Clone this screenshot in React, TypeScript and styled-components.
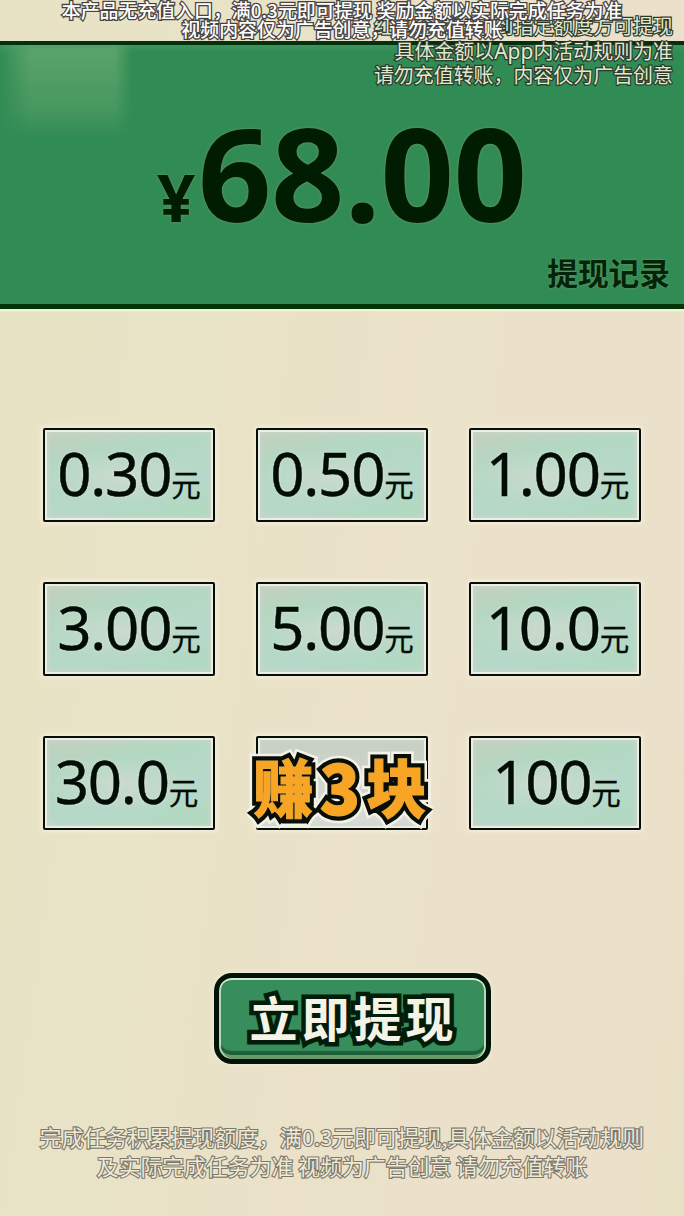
import React from "react";
import styled, { createGlobalStyle } from "styled-components";

const cjk = `"Noto Sans CJK SC", sans-serif`;

const GlobalStyle = createGlobalStyle`
  body { margin: 0; background: #e9e2c5; }
  * { box-sizing: border-box; }
`;

const Screen = styled.main`
  position: relative;
  width: 684px;
  height: 1216px;
  overflow: hidden;
  padding-top: 41px;
  display: flex;
  flex-direction: column;
  align-items: center;
  font-family: ${cjk};
  background: linear-gradient(98deg, #e8e3c5 0%, #e9e2c7 40%, #ebe1ca 65%, #ebe0ca 90%, #e8e1c4 100%);
`;

const Balance = styled.header`
  width: 100%;
  height: 268px;
  flex: none;
  display: flex;
  flex-direction: column;
  border-top: 4px solid #03300f;
  border-bottom: 5px solid #033509;
  box-shadow: 0 2px 1px #f0f5d2;
  background:
    linear-gradient(180deg, #4b9c6680 0, transparent 8px),
    linear-gradient(90deg, #318b54, transparent 30px, transparent 115px, #318b54 132px) 0 0 / 133px 95px no-repeat,
    linear-gradient(180deg, #5ca36c, #46985f 70%, #318b54) 0 0 / 132px 92px no-repeat,
    #318b54;
`;

const Amount = styled.div`
  display: flex;
  align-items: baseline;
  height: 196px;
  padding-left: 157px;
  color: #001d01;
  font-family: "Open Sans", "Noto Sans", sans-serif;
  font-weight: 700;
  line-height: 255px;
  text-shadow: 0 0 3px #6f9a6a;
`;

const Currency = styled.span`
  width: 41px;
  font-size: 67px;
`;

const Figure = styled.span`
  font-size: 128.5px;
  letter-spacing: -0.4px;
`;

const RecordLink = styled.a`
  align-self: flex-end;
  margin: 9px 14px 0 0;
  color: #022409;
  font-size: 30.7px;
  font-weight: 700;
  line-height: 44px;
  text-shadow: 0 0 3px #6d9c6c;
`;

const Options = styled.section`
  margin-top: 119px;
  display: grid;
  grid-template-columns: repeat(3, 172px);
  grid-auto-rows: 94px;
  gap: 60px 41px;
`;

const Option = styled.button<{ $muted?: boolean }>`
  position: relative;
  isolation: isolate;
  display: flex;
  align-items: flex-start;
  justify-content: center;
  padding: 0;
  border: 2px solid #080d09;
  border-radius: 2px;
  color: #020d06;
  font-family: "Noto Sans", "Open Sans", sans-serif;
  box-shadow: 0 0 4px 2px #f3eedb, inset 0 0 0 2px #e9efe4, inset 0 0 5px 3px #cfd5ca;
  background: ${(p) =>
    p.$muted
      ? "linear-gradient(#c6cfc2, #d9dcd7)"
      : "radial-gradient(ellipse 48% 30% at 45% 52%, #cbdacd, transparent), linear-gradient(165deg, #c3cfbd 0%, #b2d8c2 32%, #b6d8c9 65%, #afd9bd 100%)"};
`;

const Price = styled.span<{ $shift?: number }>`
  display: flex;
  align-items: baseline;
  margin-left: ${(p) => p.$shift ?? 0}px;
`;

const Value = styled.span`
  font-size: 60px;
  line-height: 86px;
  letter-spacing: -1.3px;
  -webkit-text-stroke: 0.4px #020d06;
  text-shadow: 0 0 3px #e3e9e1;
`;

const Unit = styled.span`
  font-family: ${cjk};
  font-size: 29.5px;
  line-height: 40px;
  -webkit-text-stroke: 0.3px #020d06;
`;

const Sticker = styled.span`
  position: absolute;
  left: -5px;
  top: -2px;
  display: flex;
  align-items: center;
  white-space: nowrap;
  font-family: ${cjk};
  font-weight: 900;
  line-height: 98px;
  transform: scaleY(1.05);
`;

const StickerGlyph = styled.span<{ $size: number; $width: number }>`
  position: relative;
  width: ${(p) => p.$width}px;
  display: flex;
  justify-content: center;
  font-size: ${(p) => p.$size}px;
  color: #080d06;
  -webkit-text-stroke: 9px #080d06;
  paint-order: stroke fill;
  stroke-linejoin: round;

  &::before,
  &::after {
    content: attr(data-glyph);
    position: absolute;
    inset: 0;
    text-align: center;
  }

  &::before {
    z-index: -1;
    color: #f3f1e8;
    -webkit-text-stroke: 14px #f3f1e8;
  }

  &::after {
    color: #f8a526;
    -webkit-text-stroke: 1px #e9ae40;
  }
`;

const Withdraw = styled.button`
  margin: 143px 0 0 21px;
  width: 277px;
  height: 91px;
  flex: none;
  display: flex;
  align-items: center;
  justify-content: center;
  padding: 0 0 5px 2px;
  border: 5px solid #021407;
  border-radius: 18px;
  color: #f5f3e5;
  font-family: ${cjk};
  font-size: 48px;
  font-weight: 700;
  letter-spacing: 4px;
  -webkit-text-stroke: 9px #021c0a;
  paint-order: stroke fill;
  background: #378d5b;
  box-shadow:
    0 0 3px 1px #f3eedb,
    inset 0 2px 0 #d6ead3,
    inset 2px 0 0 #b8d8b9,
    inset -2px 0 0 #b8d8b9,
    inset 0 -4px 0 #68996b,
    inset 0 -8px 1px #1c5f38;
`;

const Footnote = styled.footer`
  margin-top: 58px;
  color: #efead6;
  font-size: 21.85px;
  line-height: 29px;
  text-align: center;
  white-space: nowrap;
  -webkit-text-stroke: 2.2px #7b776b;
  paint-order: stroke fill;
`;

const SideNotice = styled.aside`
  position: absolute;
  top: 14px;
  right: 11px;
  color: #e2e8cf;
  font-size: 19.95px;
  line-height: 24.5px;
  text-align: right;
  white-space: nowrap;
  -webkit-text-stroke: 2.4px #2a3a2b;
  paint-order: stroke fill;
`;

const Latin = styled.span`
  font-family: "Noto Sans", sans-serif;
  font-size: 21px;
  line-height: 1;
`;

const TopNotice = styled.aside`
  position: absolute;
  top: 0;
  left: 0;
  width: 684px;
  color: #fff;
  font-size: 18.9px;
  font-weight: 500;
  line-height: 19px;
  text-align: center;
  white-space: nowrap;
  -webkit-text-stroke: 2.6px #474343;
  paint-order: stroke fill;
`;

const options: { value?: string; shift?: number; sticker?: boolean }[] = [
  { value: "0.30" },
  { value: "0.50" },
  { value: "1.00", shift: 5 },
  { value: "3.00" },
  { value: "5.00" },
  { value: "10.0", shift: 5 },
  { value: "30.0", shift: -5 },
  { sticker: true },
  { value: "100", shift: 3 },
];

export default function App() {
  return (
    <Screen>
      <GlobalStyle />
      <Balance>
        <Amount>
          <Currency>¥</Currency>
          <Figure>68.00</Figure>
        </Amount>
        <RecordLink>提现记录</RecordLink>
      </Balance>
      <Options>
        {options.map((o, i) => (
          <Option key={i} $muted={o.sticker}>
            {o.sticker ? (
              <Sticker>
                <StickerGlyph $size={60} $width={61} data-glyph="赚">赚</StickerGlyph>
                <StickerGlyph $size={67} $width={52} data-glyph="3">3</StickerGlyph>
                <StickerGlyph $size={60} $width={61} data-glyph="块">块</StickerGlyph>
              </Sticker>
            ) : (
              <Price $shift={o.shift}>
                <Value>{o.value}</Value>
                <Unit>元</Unit>
              </Price>
            )}
          </Option>
        ))}
      </Options>
      <Withdraw>立即提现</Withdraw>
      <Footnote>
        完成任务积累提现额度，满0.3元即可提现,具体金额以活动规则
        <br />
        及实际完成任务为准 视频为广告创意 请勿充值转账
      </Footnote>
      <SideNotice>
        红包金额需达到指定额度方可提现
        <br />
        具体金额以<Latin>App</Latin>内活动规则为准
        <br />
        请勿充值转账，内容仅为广告创意
      </SideNotice>
      <TopNotice>
        本产品无充值入口，满0.3元即可提现 奖励金额以实际完成任务为准
        <br />
        视频内容仅为广告创意，请勿充值转账
      </TopNotice>
    </Screen>
  );
}
